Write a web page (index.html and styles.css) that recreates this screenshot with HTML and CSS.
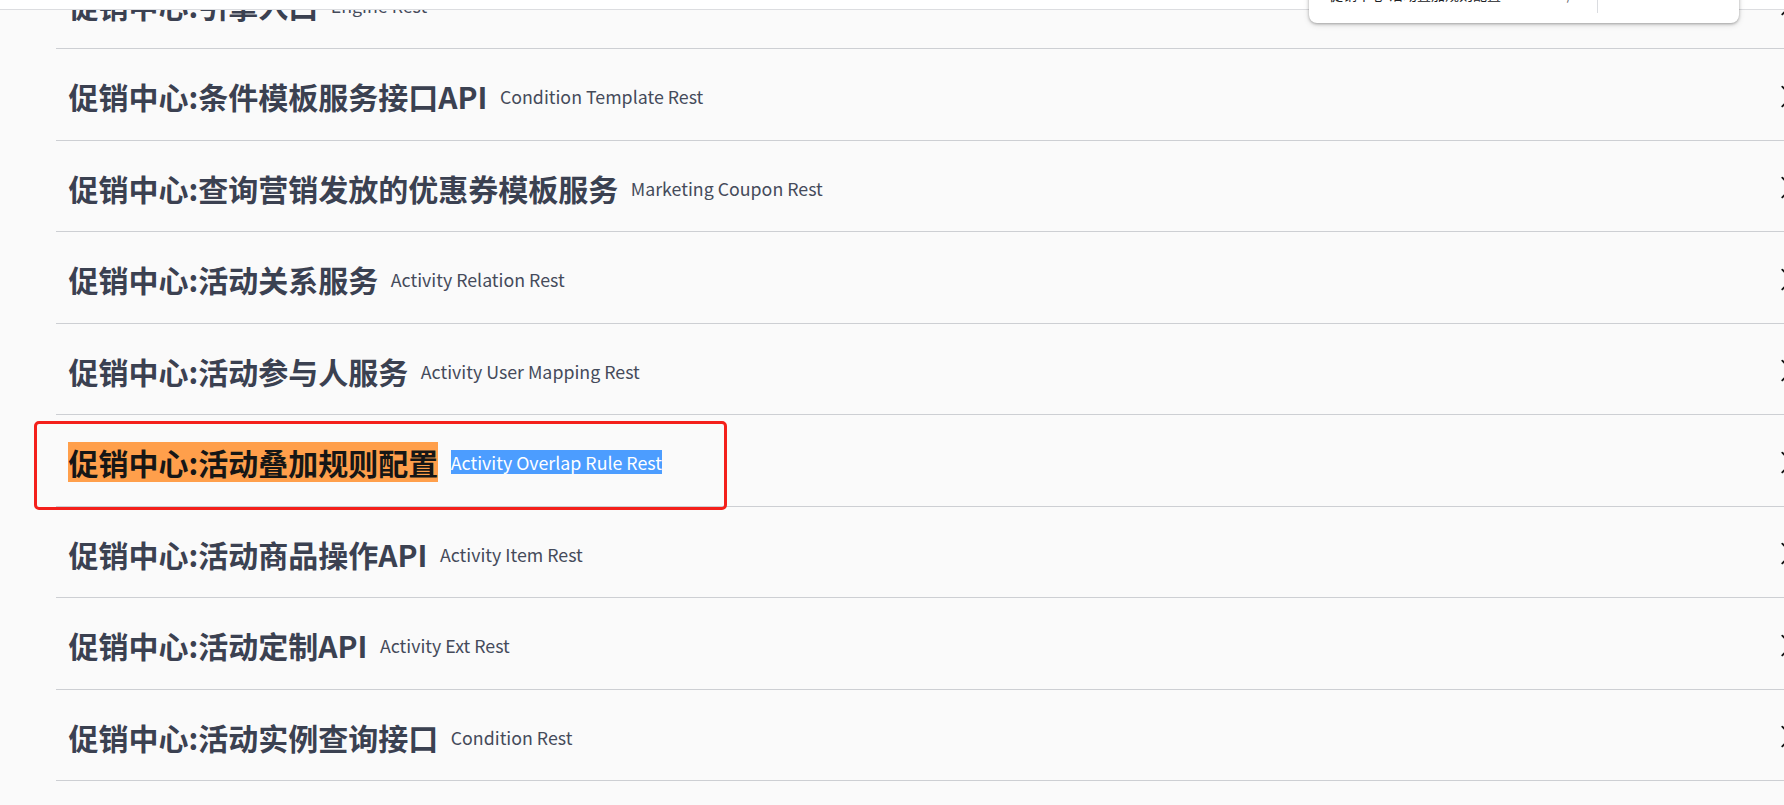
FILE: index.html
```html
<!DOCTYPE html>
<html lang="zh-CN">
<head>
<meta charset="utf-8">
<title>促销中心</title>
<link rel="stylesheet" href="styles.css">
</head>
<body>
<div class="topbar"></div>

<main class="tags">
  <section class="tag">
    <h4 class="tag-row"><span class="tag-title">促销中心:引擎入口</span><small class="tag-desc">Engine Rest</small>
      <svg class="arrow" viewBox="0 0 20 20" width="25" height="25"><path d="M13.25 10L6.109 2.58a.697.697 0 0 1 0-1.008.697.697 0 0 1 1.009 0l7.624 7.93c.278.28.278.729 0 1.008l-7.624 7.930a.697.697 0 0 1-1.009 0 .697.697 0 0 1 0-1.008L13.25 10z"/></svg></h4>
  </section>
  <section class="tag">
    <h4 class="tag-row"><span class="tag-title">促销中心:条件模板服务接口API</span><small class="tag-desc">Condition Template Rest</small>
      <svg class="arrow" viewBox="0 0 20 20" width="25" height="25"><path d="M13.25 10L6.109 2.58a.697.697 0 0 1 0-1.008.697.697 0 0 1 1.009 0l7.624 7.93c.278.28.278.729 0 1.008l-7.624 7.93a.697.697 0 0 1-1.009 0 .697.697 0 0 1 0-1.008L13.25 10z"/></svg></h4>
  </section>
  <section class="tag">
    <h4 class="tag-row"><span class="tag-title">促销中心:查询营销发放的优惠券模板服务</span><small class="tag-desc">Marketing Coupon Rest</small>
      <svg class="arrow" viewBox="0 0 20 20" width="25" height="25"><path d="M13.25 10L6.109 2.58a.697.697 0 0 1 0-1.008.697.697 0 0 1 1.009 0l7.624 7.93c.278.28.278.729 0 1.008l-7.624 7.93a.697.697 0 0 1-1.009 0 .697.697 0 0 1 0-1.008L13.25 10z"/></svg></h4>
  </section>
  <section class="tag">
    <h4 class="tag-row"><span class="tag-title">促销中心:活动关系服务</span><small class="tag-desc">Activity Relation Rest</small>
      <svg class="arrow" viewBox="0 0 20 20" width="25" height="25"><path d="M13.25 10L6.109 2.58a.697.697 0 0 1 0-1.008.697.697 0 0 1 1.009 0l7.624 7.93c.278.28.278.729 0 1.008l-7.624 7.93a.697.697 0 0 1-1.009 0 .697.697 0 0 1 0-1.008L13.25 10z"/></svg></h4>
  </section>
  <section class="tag">
    <h4 class="tag-row"><span class="tag-title">促销中心:活动参与人服务</span><small class="tag-desc">Activity User Mapping Rest</small>
      <svg class="arrow" viewBox="0 0 20 20" width="25" height="25"><path d="M13.25 10L6.109 2.58a.697.697 0 0 1 0-1.008.697.697 0 0 1 1.009 0l7.624 7.93c.278.28.278.729 0 1.008l-7.624 7.93a.697.697 0 0 1-1.009 0 .697.697 0 0 1 0-1.008L13.25 10z"/></svg></h4>
  </section>
  <section class="tag">
    <h4 class="tag-row"><span class="tag-title"><mark class="find-hit">促销中心:活动叠加规则配置</mark></span><small class="tag-desc"><mark class="selected">Activity Overlap Rule Rest</mark></small>
      <svg class="arrow" viewBox="0 0 20 20" width="25" height="25"><path d="M13.25 10L6.109 2.58a.697.697 0 0 1 0-1.008.697.697 0 0 1 1.009 0l7.624 7.93c.278.28.278.729 0 1.008l-7.624 7.93a.697.697 0 0 1-1.009 0 .697.697 0 0 1 0-1.008L13.25 10z"/></svg></h4>
  </section>
  <section class="tag">
    <h4 class="tag-row"><span class="tag-title">促销中心:活动商品操作API</span><small class="tag-desc">Activity Item Rest</small>
      <svg class="arrow" viewBox="0 0 20 20" width="25" height="25"><path d="M13.25 10L6.109 2.58a.697.697 0 0 1 0-1.008.697.697 0 0 1 1.009 0l7.624 7.93c.278.28.278.729 0 1.008l-7.624 7.93a.697.697 0 0 1-1.009 0 .697.697 0 0 1 0-1.008L13.25 10z"/></svg></h4>
  </section>
  <section class="tag">
    <h4 class="tag-row"><span class="tag-title">促销中心:活动定制API</span><small class="tag-desc">Activity Ext Rest</small>
      <svg class="arrow" viewBox="0 0 20 20" width="25" height="25"><path d="M13.25 10L6.109 2.58a.697.697 0 0 1 0-1.008.697.697 0 0 1 1.009 0l7.624 7.93c.278.28.278.729 0 1.008l-7.624 7.93a.697.697 0 0 1-1.009 0 .697.697 0 0 1 0-1.008L13.25 10z"/></svg></h4>
  </section>
  <section class="tag">
    <h4 class="tag-row"><span class="tag-title">促销中心:活动实例查询接口</span><small class="tag-desc">Condition Rest</small>
      <svg class="arrow" viewBox="0 0 20 20" width="25" height="25"><path d="M13.25 10L6.109 2.58a.697.697 0 0 1 0-1.008.697.697 0 0 1 1.009 0l7.624 7.93c.278.28.278.729 0 1.008l-7.624 7.93a.697.697 0 0 1-1.009 0 .697.697 0 0 1 0-1.008L13.25 10z"/></svg></h4>
  </section>
</main>

<div class="findbar">
  <div class="find-input">促销中心:活动叠加规则配置</div>
  <div class="find-count">1/1</div>
  <div class="find-divider"></div>
</div>

<div class="annotation"></div>
</body>
</html>
```

FILE: styles.css
```css
html, body {
  margin: 0;
  padding: 0;
}

body {
  background: #fafafa;
  width: 1784px;
  height: 805px;
  overflow: hidden;
  position: relative;
  font-family: "Noto Sans CJK SC", "Noto Sans", sans-serif;
  color: #3b4151;
}

.topbar {
  position: absolute;
  top: 0;
  left: 0;
  right: 0;
  height: 9px;
  background: #ffffff;
  border-bottom: 1px solid #dcdde0;
  z-index: 2;
}

.tags {
  margin: -36px 0 0 56px;
  width: 1768px;
}

.tag {
  margin-bottom: 6.5px;
}

.tag-row {
  box-sizing: border-box;
  display: flex;
  align-items: center;
  height: 85px;
  margin: 0;
  padding: 0 25px 0 12.5px;
  border-bottom: 1px solid #cdcfd3;
}

.tag-title {
  font-size: 30px;
  font-weight: 700;
  line-height: 40px;
  white-space: nowrap;
  position: relative;
  top: -1.5px;
}

.tag-desc {
  font-family: "Noto Sans CJK SC", "Noto Sans", sans-serif;
  font-size: 17.8px;
  font-weight: 400;
  line-height: 24px;
  padding: 0 12.5px;
  white-space: nowrap;
  position: relative;
  top: -1.5px;
  color: #454b5a;
}

.find-hit {
  display: inline-block;
  background: #ff9f4b;
  color: #161616;
  line-height: 40px;
  padding-left: 1px;
  margin-left: -1px;
}

.selected {
  display: inline-block;
  background: #4c9dff;
  color: #ffffff;
  line-height: 24px;
}

.arrow {
  margin-left: auto;
  flex: none;
  fill: #111111;
  position: relative;
  top: -1.5px;
}

.findbar {
  position: absolute;
  left: 1309px;
  top: -37px;
  width: 430px;
  height: 60px;
  box-sizing: border-box;
  background: #ffffff;
  border-radius: 8px;
  box-shadow: 0 1px 3px rgba(0, 0, 0, 0.3), 0 2px 6px rgba(0, 0, 0, 0.12);
  z-index: 3;
  display: flex;
  align-items: flex-start;
  padding: 24px 0 0 20px;
  font-size: 14px;
  color: #202124;
}

.find-input {
  width: 230px;
  line-height: 14px;
}

.find-count {
  width: 38px;
  line-height: 14px;
  color: #5f6368;
}

.find-divider {
  width: 1px;
  height: 50px;
  margin-top: -24px;
  background: #dadce0;
}

.annotation {
  position: absolute;
  left: 34px;
  top: 421px;
  width: 693px;
  height: 89px;
  box-sizing: border-box;
  border: 3px solid #f4201b;
  border-radius: 5px;
  z-index: 4;
}
```
